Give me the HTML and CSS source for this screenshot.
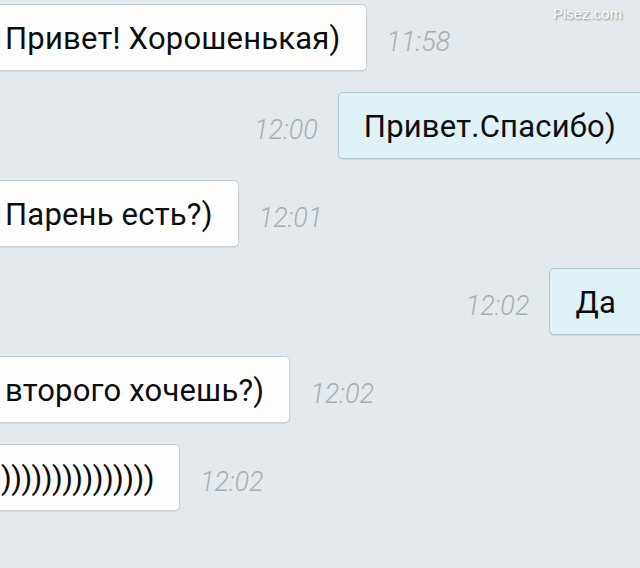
FILE: index.html
```html
<!DOCTYPE html>
<html lang="ru">
<head>
    <meta charset="UTF-8">
    <meta name="viewport" content="width=device-width, initial-scale=1.0">
    <title>Чат</title>
    <link rel="stylesheet" href="styles.css">
</head>
<body>
    <div class="chat">
        <div class="row in">
            <div class="bubble">Привет! Хорошенькая)</div>
            <div class="time">11:58</div>
        </div>
        <div class="row out">
            <div class="time">12:00</div>
            <div class="bubble">Привет.Спасибо)</div>
        </div>
        <div class="row in">
            <div class="bubble">Парень есть?)</div>
            <div class="time">12:01</div>
        </div>
        <div class="row out">
            <div class="time">12:02</div>
            <div class="bubble">Да</div>
        </div>
        <div class="row in">
            <div class="bubble">второго хочешь?)</div>
            <div class="time">12:02</div>
        </div>
        <div class="row in">
            <div class="bubble tight">)))))))))))))))</div>
            <div class="time">12:02</div>
        </div>
        <div class="watermark">Pisez.com</div>
    </div>
</body>
</html>
```

FILE: styles.css
```css
body {
    margin: 0;
    background-color: #e3e9ec;
    font-family: Roboto, "Noto Sans", sans-serif;
    overflow: hidden;
}
.chat {
    position: relative;
    width: 640px;
    height: 568px;
    overflow: hidden;
    display: flex;
    flex-direction: column;
    gap: 21px;
    padding-top: 4px;
    box-sizing: border-box;
}
.row {
    display: flex;
    align-items: center;
    gap: 20px;
}
.row.in {
    justify-content: flex-start;
    margin-left: -20px;
}
.row.out {
    justify-content: flex-end;
    margin-right: -20px;
}
.bubble {
    height: 65px;
    line-height: 67px;
    font-size: 31px;
    letter-spacing: 0.2px;
    color: #0d0d0d;
    background-color: #fdfdfd;
    border: 1px solid #c8d0d4;
    border-radius: 5px;
    box-shadow: 0 1px 1px rgba(0, 0, 0, 0.08);
    padding: 0 25px 0 24px;
    white-space: nowrap;
}
.bubble.tight {
    letter-spacing: -0.6px;
    padding-left: 20px;
}
.out .bubble {
    background-color: #dff2f8;
    border-color: #b3c7cf;
    padding: 0 43px 0 25px;
}
.time {
    font-size: 27px;
    font-style: italic;
    font-weight: 300;
    color: #a6aeb3;
    padding-top: 8px;
}
.watermark {
    position: absolute;
    top: 5px;
    left: 553px;
    font-family: Arial, "Liberation Sans", sans-serif;
    font-size: 15px;
    color: #fff;
    text-shadow: 1px 1px 2px rgba(0, 0, 0, 0.45);
}
```
